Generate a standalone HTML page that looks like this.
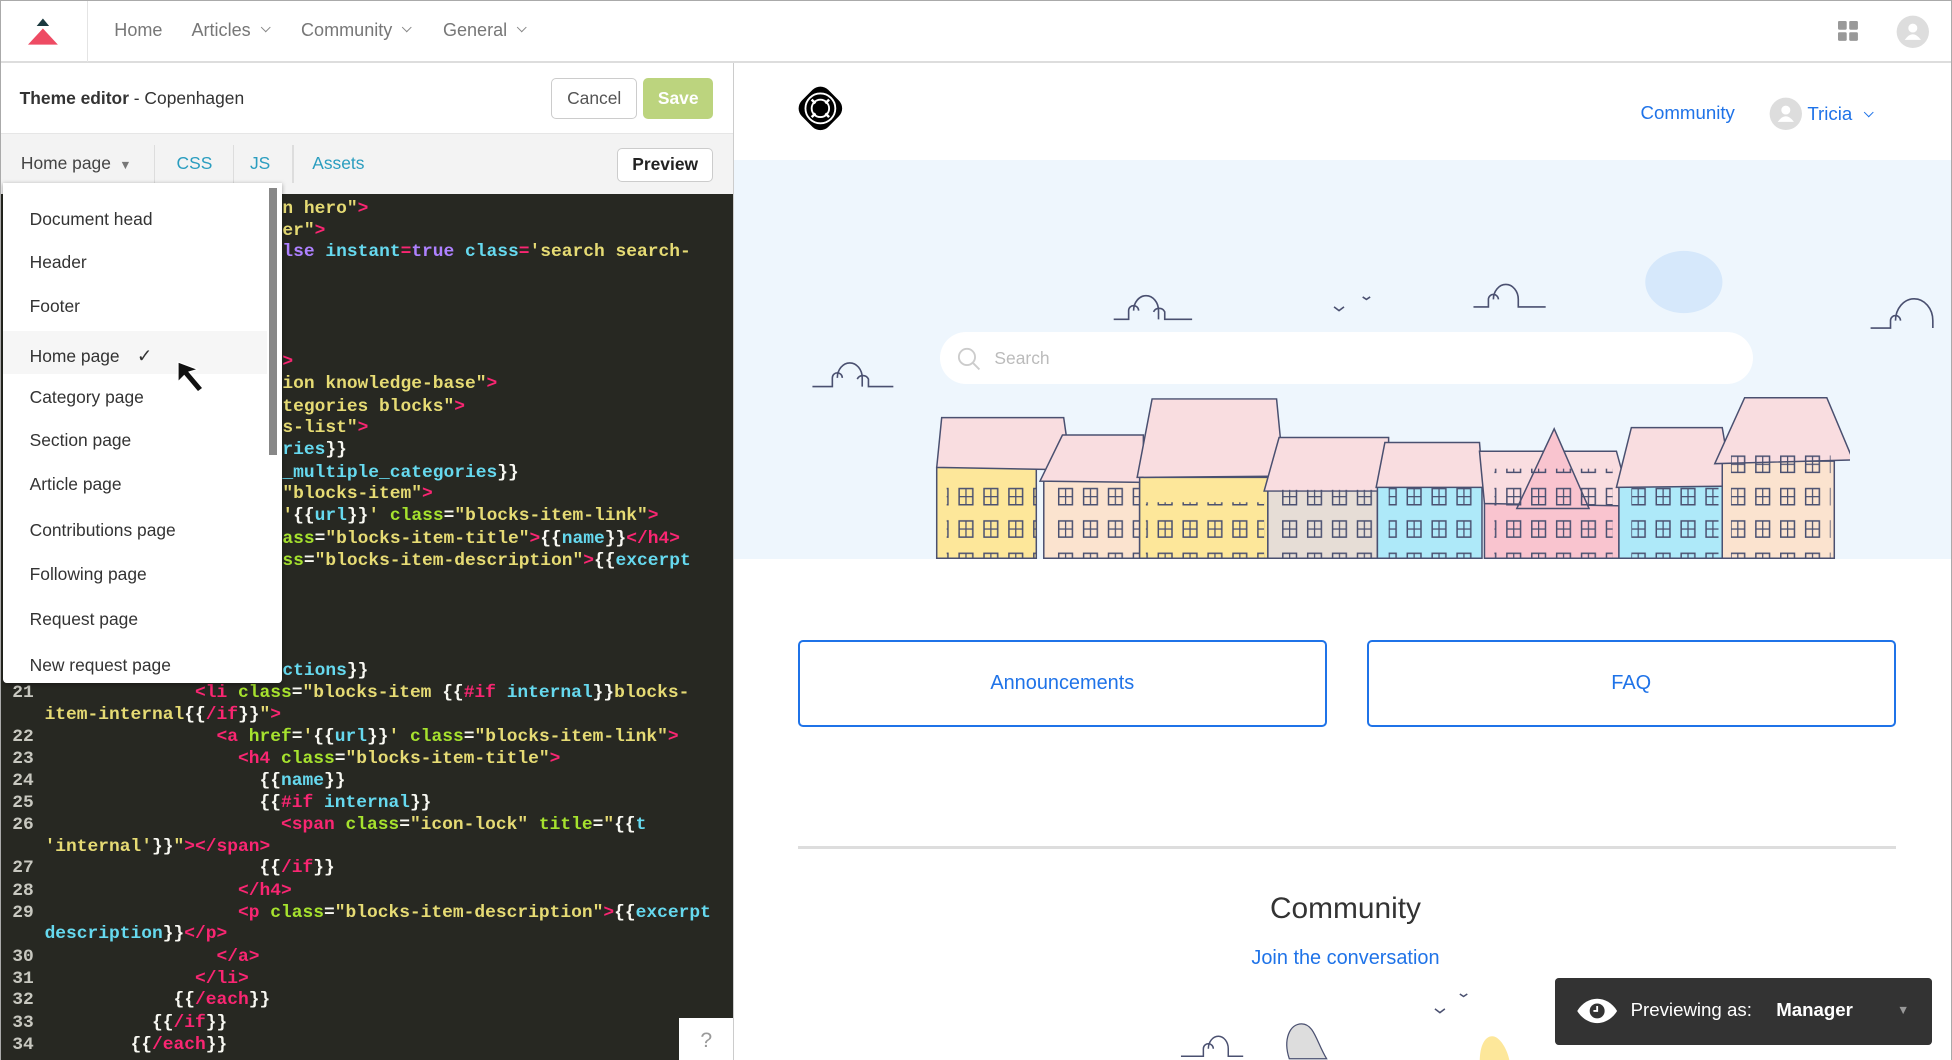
<!DOCTYPE html>
<html><head><meta charset="utf-8"><style>
*{margin:0;padding:0;box-sizing:border-box}
html,body{width:1952px;height:1060px;overflow:hidden;background:#fff}
#w{zoom:1.2449;width:1568px;height:852px;position:relative;font-family:"Liberation Sans",sans-serif;border:1px solid #aaa;overflow:hidden}
.a{position:absolute}
.nav{color:#777;font-size:14.5px;top:15px}
.chev{display:inline-block;width:6px;height:6px;border-right:1.2px solid #888;border-bottom:1.2px solid #888;transform:rotate(45deg);margin-left:9px;position:relative;top:-3px}
.code{background:#272822;left:0;top:155px;width:588px;height:697px;font-family:"Liberation Mono",monospace;font-weight:bold;font-size:14.4px;color:#f8f8f2}
.code div{position:absolute;white-space:pre;line-height:17.7px}
.n{left:9px;color:#c8c8c0}
.y{color:#e6db74}.p{color:#f92672}.g{color:#a6e22e}.c{color:#66d9ef}.v{color:#ae81ff}
.dd{left:2px;top:146px;width:224px;height:402px;background:#fff;box-shadow:0 1px 4px rgba(0,0,0,.35);border-radius:0 0 3px 3px}
.dd div{position:absolute;left:21px;font-size:14px;color:#333}
.btn{border:2px solid #1f73e8;border-radius:4px;color:#1f73e8;font-size:16px;display:flex;align-items:center;justify-content:center}
</style></head><body><div id="w">
<!-- top nav -->
<div class="a" style="left:0;top:0;width:1568px;height:50px;border-bottom:2px solid #ddd;background:#fff"></div>
<div class="a" style="left:69px;top:0;width:1px;height:49px;background:#e4e4e4"></div>
<svg class="a" style="left:18px;top:12px" width="32" height="26"><polygon points="16,2 21,8 11,8" fill="#1b3a3f"/><polygon points="16,10 28,23 4,23" fill="#ee4b63"/></svg>
<div class="a nav" style="left:91px">Home</div>
<div class="a nav" style="left:153px">Articles<span class="chev"></span></div>
<div class="a nav" style="left:241px">Community<span class="chev"></span></div>
<div class="a nav" style="left:355px">General<span class="chev"></span></div>
<svg class="a" style="left:1476px;top:16px" width="17" height="17"><rect x="0" y="0" width="7" height="7" rx="1" fill="#999"/><rect x="9" y="0" width="7" height="7" rx="1" fill="#999"/><rect x="0" y="9" width="7" height="7" rx="1" fill="#999"/><rect x="9" y="9" width="7" height="7" rx="1" fill="#999"/></svg>
<svg class="a" style="left:1522px;top:11px" width="27" height="27"><circle cx="13.5" cy="13.5" r="13" fill="#ddd"/><circle cx="13.5" cy="10.5" r="3.6" fill="#fff"/><path d="M7 20 q6.5-9 13 0z" fill="#fff"/></svg>
<!-- left header -->
<div class="a" style="left:15px;top:70px;font-size:14px;color:#333"><b>Theme editor</b> - Copenhagen</div>
<div class="a" style="left:442px;top:62px;width:69px;height:33px;border:1.5px solid #ccc;border-radius:4px;color:#555;font-size:14px;display:flex;align-items:center;justify-content:center">Cancel</div>
<div class="a" style="left:516px;top:62px;width:56px;height:33px;background:#bcd47e;border-radius:4px;color:#fff;font-weight:bold;font-size:14px;display:flex;align-items:center;justify-content:center">Save</div>
<div class="a" style="left:0;top:106px;width:588px;height:49px;background:#f3f3f3;border-top:1px solid #e6e6e6"></div>
<div class="a" style="left:16px;top:122px;font-size:14px;color:#444">Home page <span style="font-size:10px;color:#777">&nbsp;▼</span></div>
<div class="a" style="left:123px;top:116px;width:1px;height:30px;background:#ddd"></div>
<div class="a" style="left:141px;top:122px;font-size:14px;color:#2a9dbf">CSS</div>
<div class="a" style="left:186px;top:116px;width:1px;height:30px;background:#ddd"></div>
<div class="a" style="left:200px;top:122px;font-size:14px;color:#2a9dbf">JS</div>
<div class="a" style="left:234px;top:116px;width:1px;height:30px;background:#ddd"></div>
<div class="a" style="left:250px;top:122px;font-size:14px;color:#2a9dbf">Assets</div>
<div class="a" style="left:495px;top:118px;width:77px;height:27px;background:#fff;border:1.5px solid #ccc;border-radius:4px;color:#222;font-weight:bold;font-size:14px;display:flex;align-items:center;justify-content:center">Preview</div>
<div class="a" style="left:588px;top:50px;width:1px;height:802px;background:#ccc"></div>
<!-- code -->
<div class="a code">
<div style="left:226px;top:3px"><span class="y">n hero"</span><span class="p">&gt;</span></div>
<div style="left:226px;top:21px"><span class="y">er"</span><span class="p">&gt;</span></div>
<div style="left:226px;top:38px"><span class="v">lse</span> <span class="c">instant</span><span class="p">=</span><span class="v">true</span> <span class="c">class</span><span class="p">=</span><span class="y">'search search-</span></div>
<div style="left:226px;top:126px"><span class="p">&gt;</span></div>
<div style="left:226px;top:144px"><span class="y">ion knowledge-base"</span><span class="p">&gt;</span></div>
<div style="left:226px;top:162px"><span class="y">tegories blocks"</span><span class="p">&gt;</span></div>
<div style="left:226px;top:179px"><span class="y">s-list"</span><span class="p">&gt;</span></div>
<div style="left:226px;top:197px"><span class="c">ries</span>}}</div>
<div style="left:226px;top:215px"><span class="c">_multiple_categories</span>}}</div>
<div style="left:226px;top:232px"><span class="y">"blocks-item"</span><span class="p">&gt;</span></div>
<div style="left:226px;top:250px"><span class="y">'</span>{{<span class="c">url</span>}}<span class="y">'</span> <span class="g">class</span>=<span class="y">"blocks-item-link"</span><span class="p">&gt;</span></div>
<div style="left:226px;top:268px"><span class="g">ass</span>=<span class="y">"blocks-item-title"</span><span class="p">&gt;</span>{{<span class="c">name</span>}}<span class="p">&lt;/h4&gt;</span></div>
<div style="left:226px;top:286px"><span class="g">ss</span>=<span class="y">"blocks-item-description"</span><span class="p">&gt;</span>{{<span class="c">excerpt</span></div>
<div style="left:226px;top:374px"><span class="c">ctions</span>}}</div>
<div class="n" style="top:392px">21</div><div style="left:35px;top:392px">              <span class="p">&lt;li</span> <span class="g">class</span>=<span class="y">"blocks-item </span>{{<span class="p">#if</span> <span class="c">internal</span>}}<span class="y">blocks-</span></div>
<div style="left:35px;top:410px"><span class="y">item-internal</span>{{<span class="p">/if</span>}}<span class="y">"</span><span class="p">&gt;</span></div>
<div class="n" style="top:427px">22</div><div style="left:35px;top:427px">                <span class="p">&lt;a</span> <span class="g">href</span>=<span class="y">'</span>{{<span class="c">url</span>}}<span class="y">'</span> <span class="g">class</span>=<span class="y">"blocks-item-link"</span><span class="p">&gt;</span></div>
<div class="n" style="top:445px">23</div><div style="left:35px;top:445px">                  <span class="p">&lt;h4</span> <span class="g">class</span>=<span class="y">"blocks-item-title"</span><span class="p">&gt;</span></div>
<div class="n" style="top:463px">24</div><div style="left:35px;top:463px">                    {{<span class="c">name</span>}}</div>
<div class="n" style="top:480px">25</div><div style="left:35px;top:480px">                    {{<span class="p">#if</span> <span class="c">internal</span>}}</div>
<div class="n" style="top:498px">26</div><div style="left:35px;top:498px">                      <span class="p">&lt;span</span> <span class="g">class</span>=<span class="y">"icon-lock"</span> <span class="g">title</span>=<span class="y">"</span>{{<span class="c">t</span></div>
<div style="left:35px;top:516px"><span class="y">'internal'</span>}}<span class="y">"</span><span class="p">&gt;&lt;/span&gt;</span></div>
<div class="n" style="top:533px">27</div><div style="left:35px;top:533px">                    {{<span class="p">/if</span>}}</div>
<div class="n" style="top:551px">28</div><div style="left:35px;top:551px">                  <span class="p">&lt;/h4&gt;</span></div>
<div class="n" style="top:569px">29</div><div style="left:35px;top:569px">                  <span class="p">&lt;p</span> <span class="g">class</span>=<span class="y">"blocks-item-description"</span><span class="p">&gt;</span>{{<span class="c">excerpt</span></div>
<div style="left:35px;top:586px"><span class="c">description</span>}}<span class="p">&lt;/p&gt;</span></div>
<div class="n" style="top:604px">30</div><div style="left:35px;top:604px">                <span class="p">&lt;/a&gt;</span></div>
<div class="n" style="top:622px">31</div><div style="left:35px;top:622px">              <span class="p">&lt;/li&gt;</span></div>
<div class="n" style="top:639px">32</div><div style="left:35px;top:639px">            {{<span class="p">/each</span>}}</div>
<div class="n" style="top:657px">33</div><div style="left:35px;top:657px">          {{<span class="p">/if</span>}}</div>
<div class="n" style="top:675px">34</div><div style="left:35px;top:675px">        {{<span class="p">/each</span>}}</div>
</div>
<div class="a" style="left:545px;top:817px;width:43px;height:35px;background:#fff;color:#999;font-size:17px;text-align:center;padding-top:9px">?</div>
<!-- dropdown -->
<div class="a dd">
<div style="top:21px">Document head</div>
<div style="top:56px">Header</div>
<div style="top:91px">Footer</div>
<div style="left:0;top:119px;width:212px;height:35px;background:#f6f6f6"></div>
<div style="top:130px">Home page <span style="margin-left:10px;font-size:15px">✓</span></div>
<div style="top:164px">Category page</div>
<div style="top:199px">Section page</div>
<div style="top:234px">Article page</div>
<div style="top:271px">Contributions page</div>
<div style="top:306px">Following page</div>
<div style="top:342px">Request page</div>
<div style="top:379px">New request page</div>
<div style="left:213px;top:4px;width:7px;height:215px;background:#888"></div>
</div>
<svg class="a" style="left:138px;top:286px" width="36" height="36"><path d="M4 4 L4 20 L9 15 L20 28 L24 25 L13 12 L20 10 Z" fill="#111" stroke="#fff" stroke-width="1"/></svg>
<!-- right preview -->
<svg class="a" style="left:636px;top:64px" width="44" height="44"><rect x="7" y="7" width="30" height="30" rx="9" transform="rotate(45 22 22)" fill="#000"/><circle cx="22" cy="22" r="12" fill="none" stroke="#fff" stroke-width="1.5"/><circle cx="22" cy="22" r="7" fill="#000" stroke="#fff" stroke-width="1.5"/><path d="M15 15l3 3M29 15l-3 3M15 29l3-3M29 29l-3-3" stroke="#fff" stroke-width="2"/></svg>
<div class="a" style="left:1317px;top:81px;font-size:15px;color:#1f73e8">Community</div>
<svg class="a" style="left:1420px;top:77px" width="27" height="27"><circle cx="13.5" cy="13.5" r="13" fill="#ddd"/><circle cx="13.5" cy="10.5" r="3.6" fill="#fff"/><path d="M7 20 q6.5-9 13 0z" fill="#fff"/></svg>
<div class="a" style="left:1451px;top:82px;font-size:15px;color:#1f73e8">Tricia <span class="chev" style="border-color:#1f73e8;margin-left:6px"></span></div>
<div class="a" style="left:589px;top:128px;width:978px;height:320px;background:#eef6fd"></div>
<svg class="a" style="left:589px;top:128px" width="978" height="320">
<ellipse cx="763" cy="98" rx="31" ry="25" fill="#d6e8fb"/>
<g fill="none" stroke="#4a5070" stroke-width="1.3">
<path d="M305 128h12v-7a4 4 0 0 1 8 0 M321 121a10 12 0 0 1 20 0v7 M337 122a5 5 0 0 1 9 0v6h22"/>
<path d="M594 118h12v-6a4 4 0 0 1 8 0 M610 112a10 12 0 0 1 20 0v6h22"/>
<path d="M63 182h16v-7a4 4 0 0 1 8 0 M83 175a10 12 0 0 1 20 0v7 M99 176a5 5 0 0 1 9 0v6h20"/>
<path d="M913 135h16v-6a4 4 0 0 1 8 0 M933 129a12 14 0 0 1 30 0v6"/>
<path d="M482 118l4 3 4-3 M505 110l3 2 3-2"/>
</g></svg>
<div class="a" style="left:754px;top:266px;width:653px;height:42px;background:#fff;border-radius:21px"></div>
<svg class="a" style="left:768px;top:278px" width="20" height="20"><circle cx="8" cy="8" r="6.5" fill="none" stroke="#ccc" stroke-width="1.5"/><path d="M13 13l5 5" stroke="#ccc" stroke-width="1.5"/></svg>
<div class="a" style="left:798px;top:279px;font-size:14px;color:#bbb">Search</div>
<svg class="a" style="left:745px;top:308px" width="740" height="140">
<defs><pattern id="win" width="20" height="26" patternUnits="userSpaceOnUse"><rect x="5" y="6" width="11" height="13" fill="none" stroke="#4a5070" stroke-width="1.2"/><path d="M10.5 6v13M5 12.5h11" stroke="#4a5070" stroke-width="1"/></pattern></defs>
<g stroke="#4a5070" stroke-width="1.2">
<path d="M7 67h80v73H7z" fill="#fde79a"/><path d="M7 67l4-40h98l6 42z" fill="#f9dde0"/>
<path d="M93 77h77v63H93z" fill="#fbe3cf"/><path d="M90 78l18-37h65v38z" fill="#f9dde0"/>
<path d="M170 75h103v65H170z" fill="#fde79a"/><path d="M168 75l12-63h100l6 62z" fill="#f9dde0"/>
<path d="M273 85h88v55H273z" fill="#e6ddd6"/><path d="M270 86l12-43h88v43z" fill="#f9dde0"/>
<path d="M361 82h84v58H361z" fill="#aee9f9"/><path d="M360 83l7-36h76l3 36z" fill="#f9dde0"/>
<path d="M447 96h108v44H447z" fill="#f9c4cf"/><path d="M447 96l-4-42h110l12 44z" fill="#f9dde0"/><path d="M473 100l30-64 28 64z" fill="#f9c4cf"/>
<path d="M555 82h85v58H555z" fill="#aee9f9"/><path d="M553 83l12-48h73l8 47z" fill="#f9dde0"/>
<path d="M638 62h90v78H638z" fill="#fbe3cf"/><path d="M632 64l24-53h66l21 50z" fill="#f9dde0"/>
</g>
<rect x="15" y="72" width="72" height="68" fill="url(#win)"/>
<rect x="100" y="82" width="70" height="58" fill="url(#win)"/>
<rect x="175" y="95" width="95" height="45" fill="url(#win)"/>
<rect x="278" y="85" width="80" height="55" fill="url(#win)"/>
<rect x="370" y="82" width="70" height="58" fill="url(#win)"/>
<rect x="455" y="68" width="95" height="72" fill="url(#win)"/>
<rect x="565" y="82" width="70" height="58" fill="url(#win)"/>
<rect x="645" y="55" width="80" height="85" fill="url(#win)"/>
</svg>
<div class="a btn" style="left:640px;top:513px;width:425px;height:70px">Announcements</div>
<div class="a btn" style="left:1097px;top:513px;width:425px;height:70px">FAQ</div>
<div class="a" style="left:640px;top:679px;width:882px;height:2px;background:#ddd"></div>
<div class="a" style="left:880px;top:716px;width:400px;text-align:center;font-size:24px;color:#333">Community</div>
<div class="a" style="left:880px;top:760px;width:400px;text-align:center;font-size:16px;color:#1f73e8">Join the conversation</div>
<svg class="a" style="left:940px;top:790px" width="280" height="62"><g fill="none" stroke="#4a5070" stroke-width="1.2"><path d="M8 58h18v-6a4 4 0 0 1 8 0 M30 52a8 10 0 0 1 16 0v6h12"/><path d="M212 20l4 3 4-3 M232 8l3 2 3-2"/></g><path d="M95 60c-5-15 0-28 10-28s12 15 20 28z" fill="#ddd" stroke="#4a5070"/><path d="M248 62c0-12 4-20 10-20s12 10 14 20z" fill="#fde79a"/></svg>
<div class="a" style="left:1248px;top:785px;width:303px;height:54px;background:#333;border-radius:3px"></div>
<svg class="a" style="left:1265px;top:799px" width="34" height="24"><path d="M1 12c8-13 24-13 32 0c-8 13-24 13-32 0z" fill="#fff"/><circle cx="17" cy="12" r="6" fill="#333"/><path d="M17 8v4h-3" stroke="#fff" stroke-width="1.5" fill="none"/></svg>
<div class="a" style="left:1309px;top:802px;font-size:15px;color:#fff">Previewing as:</div>
<div class="a" style="left:1426px;top:802px;font-size:15px;color:#fff;font-weight:bold">Manager</div>
<div class="a" style="left:1523px;top:805px;font-size:10px;color:#999">▼</div>
</div></body></html>
